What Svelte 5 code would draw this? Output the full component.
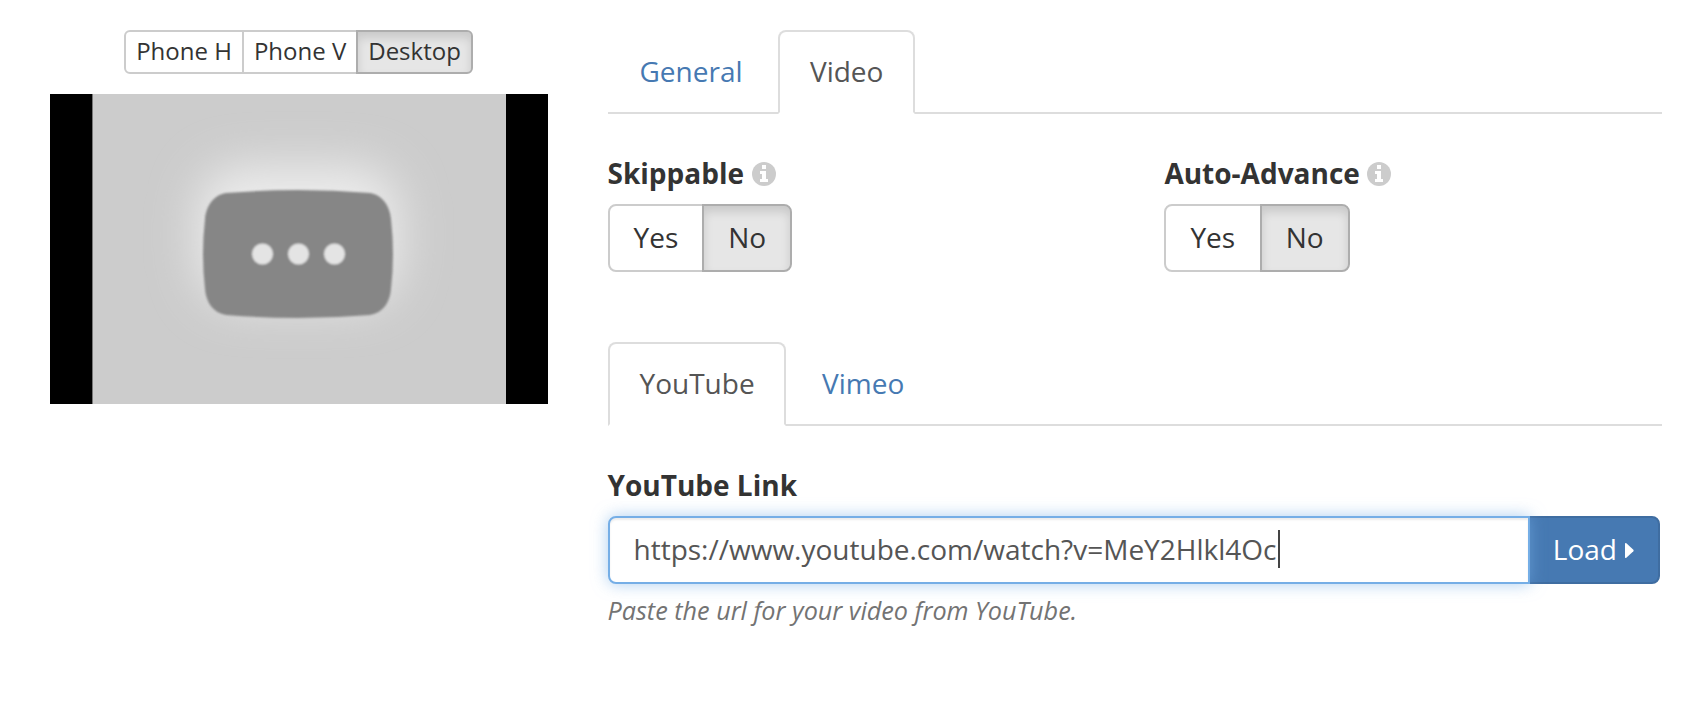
<script>
  let device = "Desktop";
  let mainTab = "Video";
  let sourceTab = "YouTube";
  let options = [
    { label: "Skippable", value: "No" },
    { label: "Auto-Advance", value: "No" },
  ];
  let link = "https://www.youtube.com/watch?v=MeY2Hlkl4Oc";
</script>

<div class="editor">
  <div class="preview">
    <div class="btn-group small">
      {#each ["Phone H", "Phone V", "Desktop"] as name}
        <button class:active={device === name} on:click={() => (device = name)}>{name}</button>
      {/each}
    </div>
    <div class="player">
      <svg class="thumb" viewBox="0 0 414 310">
        <defs>
          <filter id="glow" x="-50%" y="-60%" width="200%" height="220%">
            <feGaussianBlur stdDeviation="23" />
          </filter>
          <filter id="soften">
            <feGaussianBlur stdDeviation="0.9" />
          </filter>
        </defs>
        <rect width="414" height="310" fill="#cccccc" />
        <rect x="106" y="72" width="201" height="138" rx="45" fill="#ececec" filter="url(#glow)" />
        <g filter="url(#soften)">
          <path
            fill="#868686"
            d="M134 99 Q206 93 278 99 C291 101 298 113 299 125 Q303 160 299 195 C298 208 291 219 278 221 Q206 227 134 221 C121 219 114 208 113 195 Q109 160 113 125 C114 113 121 101 134 99Z"
          />
          <circle cx="170.5" cy="160" r="10.5" fill="#e4e4e4" />
          <circle cx="206.5" cy="160" r="10.5" fill="#e4e4e4" />
          <circle cx="242.5" cy="160" r="10.5" fill="#e4e4e4" />
        </g>
        <rect width="1" height="310" fill="#777777" />
      </svg>
    </div>
  </div>

  <div class="settings">
    <ul class="tabs">
      {#each ["General", "Video"] as tab}
        <li><button class:active={mainTab === tab} on:click={() => (mainTab = tab)}>{tab}</button></li>
      {/each}
    </ul>

    <div class="options">
      {#each options as option}
        <div class="option">
          <div class="label">
            {option.label}
            <svg class="info" viewBox="0 0 24 24">
              <circle cx="12" cy="12" r="12" fill="#cccccc" />
              <path fill="#ffffff" d="M10 3h4v4h-4zM8 9h6v8h2v3H8v-3h2v-5H8z" />
            </svg>
          </div>
          <div class="btn-group">
            {#each ["Yes", "No"] as value}
              <button class:active={option.value === value} on:click={() => (option.value = value)}>{value}</button>
            {/each}
          </div>
        </div>
      {/each}
    </div>

    <ul class="tabs">
      {#each ["YouTube", "Vimeo"] as tab}
        <li><button class:active={sourceTab === tab} on:click={() => (sourceTab = tab)}>{tab}</button></li>
      {/each}
    </ul>

    <div class="source">
      <div class="label">YouTube Link</div>
      <div class="input-group">
        <div class="field"><span>{link}</span><i class="caret"></i></div>
        <button class="load">
          Load
          <svg viewBox="0 0 10 18"><path fill="#ffffff" d="M0 1.5Q0 0 1.5 1L9.3 8.2Q10 9 9.3 9.8L1.5 17Q0 18 0 16.5Z" /></svg>
        </button>
      </div>
      <p class="help">Paste the url for your video from YouTube.</p>
    </div>
  </div>
</div>

<style>
  :global(body) {
    background: #ffffff;
  }

  .editor {
    display: flex;
    gap: 59.5px;
    box-sizing: border-box;
    width: 1696px;
    height: 702px;
    padding: 30px 34px 0 50px;
    font-family: "Open Sans", sans-serif;
    font-size: 28px;
    line-height: 40px;
    color: #333333;
  }

  button {
    font: inherit;
    color: inherit;
    cursor: pointer;
  }

  .preview {
    flex: none;
    width: 498px;
  }

  .btn-group {
    display: flex;
  }

  .btn-group button {
    box-sizing: border-box;
    height: 68px;
    padding: 11px 24px 13px;
    border: 2px solid #cccccc;
    background: #ffffff;
  }

  .btn-group button + button {
    margin-left: -2px;
  }

  .btn-group button:first-child {
    border-radius: 8px 0 0 8px;
  }

  .btn-group button:last-child {
    border-radius: 0 8px 8px 0;
  }

  .btn-group button.active {
    position: relative;
    background: #e6e6e6;
    border-color: #adadad;
    box-shadow: inset 0 6px 10px rgba(0, 0, 0, 0.125);
  }

  .small {
    justify-content: center;
    margin-right: 1px;
    font-size: 24px;
    line-height: 36px;
  }

  .btn-group.small button {
    height: 44px;
    padding: 1px 10px 3px;
  }

  .btn-group.small button:first-child {
    border-radius: 6px 0 0 6px;
  }

  .btn-group.small button:last-child {
    border-radius: 0 6px 6px 0;
  }

  .player {
    display: flex;
    justify-content: center;
    height: 310px;
    margin-top: 20px;
    background: #000000;
  }

  .thumb {
    width: 414px;
    height: 310px;
  }

  .settings {
    flex: none;
    width: 1054.5px;
  }

  .tabs {
    display: flex;
    height: 82px;
    margin: 0;
    padding: 0;
    list-style: none;
    border-bottom: 2px solid #dddddd;
  }

  .tabs li {
    margin-right: 3.6px;
  }

  .tabs button {
    height: 84px;
    padding: 19px 29.8px 21px 30px;
    border: 2px solid transparent;
    border-radius: 8px 8px 0 0;
    background: none;
    color: #4679b2;
  }

  .tabs button.active {
    color: #555555;
    background: #ffffff;
    border-color: #dddddd;
    border-bottom-color: transparent;
  }

  .options {
    display: grid;
    grid-template-columns: 556.9px 1fr;
    padding: 40px 0 70px;
  }

  .option + .option .btn-group button {
    padding-right: 24.5px;
  }

  .label {
    display: flex;
    align-items: flex-start;
    gap: 7.5px;
    height: 40px;
    margin-bottom: 10px;
    font-weight: 700;
    line-height: 38px;
  }

  .info {
    width: 24px;
    height: 24px;
    margin-top: 8px;
  }

  .source {
    padding-top: 40px;
  }

  .input-group {
    display: flex;
    width: 1052.5px;
  }

  .field {
    display: flex;
    align-items: center;
    flex: 1;
    box-sizing: border-box;
    height: 68px;
    padding: 0 24px 2px;
    color: #555555;
    background: #ffffff;
    border: 2px solid #75aee6;
    border-radius: 8px 0 0 8px;
    box-shadow: inset 0 2px 2px rgba(0, 0, 0, 0.075), 0 0 16px rgba(117, 174, 230, 0.6);
    position: relative;
    z-index: 1;
  }

  .caret {
    width: 2px;
    height: 38px;
    margin-left: 1.5px;
    background: #444444;
  }

  .load {
    display: flex;
    align-items: center;
    gap: 8px;
    box-sizing: border-box;
    height: 68px;
    margin-left: -2px;
    padding: 0 24px 2px 23px;
    color: #ffffff;
    background: #4679b2;
    border: 2px solid #3f6da1;
    border-radius: 0 8px 8px 0;
  }

  .load svg {
    width: 9px;
    height: 17px;
    margin-top: 2px;
  }

  .help {
    margin: 9px 0 0;
    font-size: 25.2px;
    line-height: 34px;
    font-style: italic;
    color: #737373;
  }
</style>
